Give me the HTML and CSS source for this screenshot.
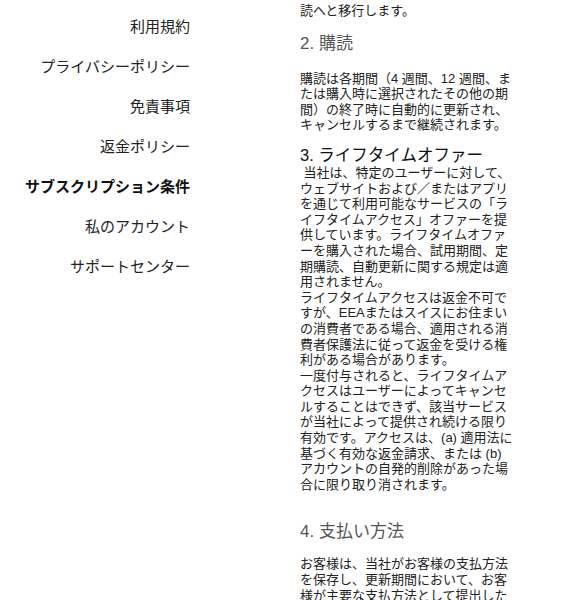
FILE: index.html
```html
<!DOCTYPE html>
<html lang="ja">
<head>
<meta charset="utf-8">
<title>サブスクリプション条件</title>
<link rel="stylesheet" href="styles.css">
</head>
<body>
<div class="page">
  <nav class="sidebar">
    <a class="nav-item" href="#">利用規約</a>
    <a class="nav-item" href="#">プライバシーポリシー</a>
    <a class="nav-item" href="#">免責事項</a>
    <a class="nav-item" href="#">返金ポリシー</a>
    <a class="nav-item active" href="#">サブスクリプション条件</a>
    <a class="nav-item" href="#">私のアカウント</a>
    <a class="nav-item" href="#">サポートセンター</a>
  </nav>
  <main class="content">
    <p class="para">読へと移行します。</p>
    <h2 class="sub-title">2. 購読</h2>
    <p class="para sec2">購読は各期間（4 週間、12 週間、または購入時に選択されたその他の期間）の終了時に自動的に更新され、キャンセルするまで継続されます。</p>
    <h3 class="lifetime-title">3. ライフタイムオファー</h3>
    <p class="para">&nbsp;当社は、特定のユーザーに対して、ウェブサイトおよび／またはアプリを通じて利用可能なサービスの「ライフタイムアクセス」オファーを提供しています。ライフタイムオファーを購入された場合、試用期間、定期購読、自動更新に関する規定は適用されません。<br>ライフタイムアクセスは返金不可ですが、EEAまたはスイスにお住まいの消費者である場合、適用される消費者保護法に従って返金を受ける権利がある場合があります。<br>一度付与されると、ライフタイムアクセスはユーザーによってキャンセルすることはできず、該当サービスが当社によって提供され続ける限り有効です。アクセスは、(a) 適用法に基づく有効な返金請求、または (b) アカウントの自発的削除があった場合に限り取り消されます。</p>
    <h2 class="sub-title sec4">4. 支払い方法</h2>
    <p class="para">お客様は、当社がお客様の支払方法を保存し、更新期間において、お客様が主要な支払方法として提出した支払方法に請求することを承認するものとします。</p>
  </main>
</div>
</body>
</html>
```
FILE: styles.css
```css
html, body {
  margin: 0;
  padding: 0;
  background: #ffffff;
}
body {
  font-family: "Liberation Sans", "Noto Sans CJK JP", sans-serif;
  color: #222222;
  overflow: hidden;
  height: 600px;
}
.page {
  display: flex;
  align-items: flex-start;
}
.sidebar {
  width: 190px;
  flex: none;
  display: flex;
  flex-direction: column;
  align-items: flex-end;
  gap: 20px;
  padding-top: 17px;
}
.nav-item {
  display: block;
  font-size: 15px;
  line-height: 20px;
  color: #222222;
  text-decoration: none;
  white-space: nowrap;
}
.nav-item.active {
  font-weight: 700;
  color: #111111;
}
.content {
  margin-left: 110px;
  width: 216px;
  padding-top: 3px;
}
.para {
  margin: 0;
  font-size: 13px;
  line-height: 15.6px;
}
.sub-title {
  margin: 15px 0 0;
  font-size: 17px;
  line-height: 19px;
  font-weight: 400;
  color: #555555;
}
.para.sec2 {
  margin-top: 18px;
}
.lifetime-title {
  margin: 13px 0 0;
  font-size: 16.5px;
  line-height: 19px;
  font-weight: 400;
  color: #111111;
}
.sub-title.sec4 {
  margin-top: 30px;
  margin-bottom: 15px;
}
```
